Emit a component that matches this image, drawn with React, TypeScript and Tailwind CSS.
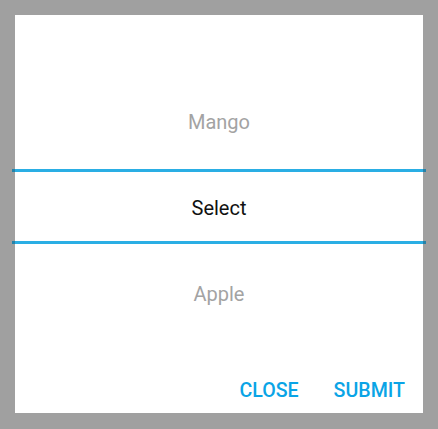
const items = ['Mango', 'Select', 'Apple']

function Divider() {
  return (
    <div className="-mx-[3px] flex h-[3px]">
      <div className="w-[3px] bg-[#2682a8]" />
      <div className="flex-1 bg-[#2aaee4]" />
      <div className="w-[3px] bg-[#2682a8]" />
    </div>
  )
}

export default function App() {
  return (
    <div
      className="flex h-[429px] w-[438px] bg-[#a0a0a0] p-[15px]"
      style={{ fontFamily: 'Roboto, "Noto Sans", sans-serif' }}
    >
      <div className="flex h-[398px] w-[408px] flex-col bg-white">
        <div className="flex flex-col pt-[64px]">
          <div className="flex h-[86px] items-center justify-center text-[20px] text-[#a3a3a3]">
            {items[0]}
          </div>
          <div className="h-[4px]" />
          <Divider />
          <div className="flex h-[69px] items-center justify-center pt-[2px] text-[20px] text-[#111111]">
            {items[1]}
          </div>
          <Divider />
          <div className="mt-[7px] flex h-[86px] items-center justify-center text-[20px] text-[#a3a3a3]">
            {items[2]}
          </div>
        </div>
        <div className="flex-1" />
        <div className="flex justify-end gap-[19px] pb-[4px] pr-[10px]">
          <button className="h-[37px] px-[8px] text-[19.6px] font-medium text-[#0aa4e6]">CLOSE</button>
          <button className="h-[37px] px-[8px] text-[19.6px] font-medium text-[#0aa4e6]">SUBMIT</button>
        </div>
      </div>
    </div>
  )
}
